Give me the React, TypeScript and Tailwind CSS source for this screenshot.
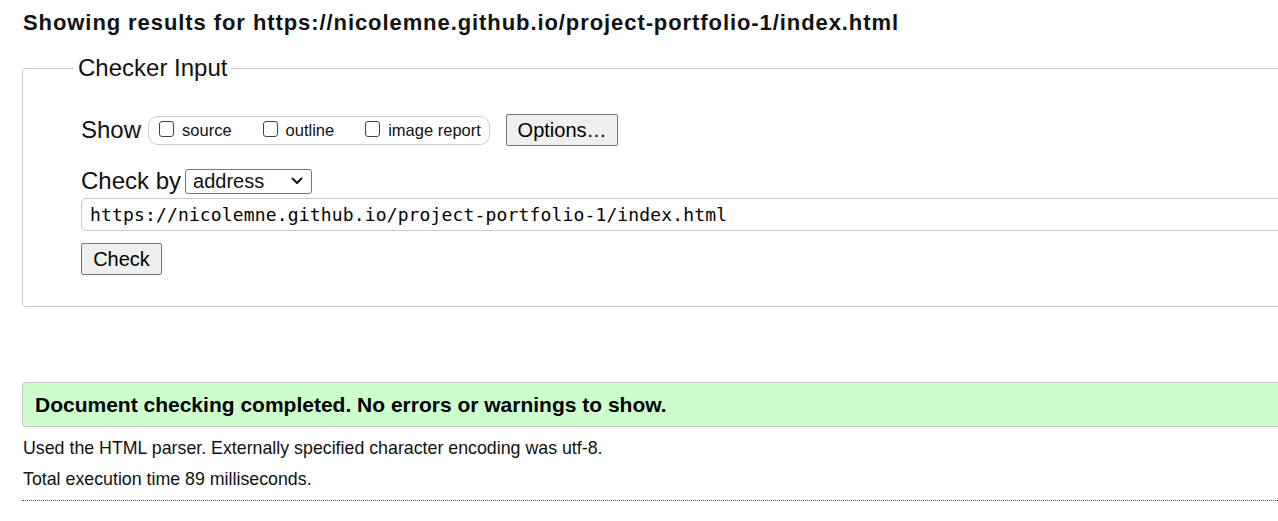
import React from 'react';

const url = 'https://nicolemne.github.io/project-portfolio-1/index.html';

const Box = ({ label }: { label: string }) => (
  <label className="flex items-end">
    <span className="w-[15px] h-[16px] border border-[#444] rounded-[3px] bg-white mb-[2px]" />
    <span className="ml-[8px] text-[16.5px] leading-[18px]">{label}</span>
  </label>
);

const Button = ({ children, className = '' }: { children: React.ReactNode; className?: string }) => (
  <button
    type="button"
    className={`h-[32px] bg-[#efefef] border border-[#767676] rounded-[2px] text-[20px] leading-[22px] text-black ${className}`}
  >
    {children}
  </button>
);

export default function App() {
  return (
    <div className="w-full overflow-hidden bg-white text-[#111] font-['Liberation_Sans',Arial,sans-serif]">
      <div className="w-[1320px] pl-[22px]">
        <h2 className="mt-[11px] pl-[1px] text-[22px] leading-[24px] font-bold tracking-[0.92px]">
          Showing results for {url}
        </h2>

        <fieldset className="mt-[19px] border border-[#c8c8c8] rounded-[4px] pl-[58px] pb-[31px]">
          <legend className="ml-[-7px] px-[4px] text-[24px] leading-[28px]">Checker Input</legend>

          <div className="mt-[32px] flex items-center h-[32px]">
            <span className="text-[24px] leading-[28px]">Show</span>
            <div className="ml-[7px] h-[29px] w-[342px] border border-[#ccc] rounded-[10px] flex items-center pl-[10px] gap-[31px]">
              <Box label="source" />
              <Box label="outline" />
              <Box label="image report" />
            </div>
            <Button className="ml-[16px] w-[112px]">Options…</Button>
          </div>

          <div className="mt-[21px] flex items-center h-[28px]">
            <span className="text-[24px] leading-[28px]">Check by</span>
            <div className="ml-[4px] h-[25px] w-[127px] border border-[#767676] rounded-[3px] flex items-center justify-between pl-[7px] pr-[8px]">
              <span className="text-[20px] leading-[22px]">address</span>
              <svg width="12" height="8" viewBox="0 0 12 8" fill="none">
                <path d="M1.5 1.5 6 6l4.5-4.5" stroke="#111" strokeWidth="2" strokeLinecap="round" strokeLinejoin="round" />
              </svg>
            </div>
          </div>

          <div className="mt-[3px] h-[33px] border border-[#c8c8c8] rounded-[5px] flex items-center pl-[8px]">
            <span className="font-['DejaVu_Sans_Mono',monospace] text-[18px] leading-[20px] text-black tracking-[0.15px]">
              {url}
            </span>
          </div>

          <Button className="mt-[12px] w-[81px]">Check</Button>
        </fieldset>

        <div className="mt-[75px] h-[45px] bg-[#ccffcc] border border-[#c4c4c4] rounded-[4px] flex items-center pl-[12px]">
          <span className="text-[21px] leading-[24px] font-bold text-black">
            Document checking completed. No errors or warnings to show.
          </span>
        </div>

        <p className="mt-[11px] pl-[1px] text-[17.8px] leading-[20px]">
          Used the HTML parser. Externally specified character encoding was utf-8.
        </p>
        <p className="mt-[11px] pl-[1px] text-[17.8px] leading-[20px]">Total execution time 89 milliseconds.</p>
        <div className="mt-[11px] border-b border-dotted border-[#555]" />
        <div className="h-[20px]" />
      </div>
    </div>
  );
}
